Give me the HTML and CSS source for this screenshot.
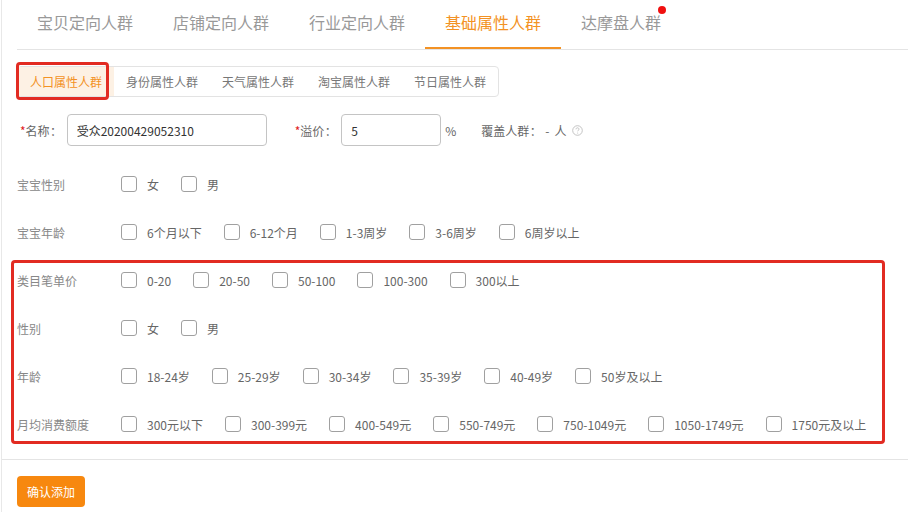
FILE: index.html
```html
<!DOCTYPE html>
<html lang="zh-CN">
<head>
    <meta charset="UTF-8">
    <title>基础属性人群</title>
    <link rel="stylesheet" href="styles.css">
</head>
<body>
    <div class="page">
        <div class="tabs">
            <div class="tab">宝贝定向人群</div>
            <div class="tab">店铺定向人群</div>
            <div class="tab">行业定向人群</div>
            <div class="tab active">基础属性人群</div>
            <div class="tab dot">达摩盘人群</div>
        </div>

        <div class="inner">
            <div class="subtabs">
                <div class="subtab active">人口属性人群<span class="mark mark-tab"></span></div>
                <div class="subtab">身份属性人群</div>
                <div class="subtab">天气属性人群</div>
                <div class="subtab">淘宝属性人群</div>
                <div class="subtab">节日属性人群</div>
            </div>

            <div class="form-row">
                <label class="field-label"><i>*</i>名称<span class="colon">：</span></label>
                <input class="text-input name-input" type="text" value="受众20200429052310">
                <label class="field-label price-label"><i>*</i>溢价<span class="colon">：</span></label>
                <input class="text-input price-input" type="text" value="5">
                <span class="unit">%</span>
                <span class="cover">覆盖人群<span class="colon">：</span><span class="dash">-</span>人</span>
                <svg class="help" width="11" height="11" viewBox="0 0 11 11">
                    <circle cx="5.5" cy="5.5" r="4.8" fill="none" stroke="#b5b5b5" stroke-width="0.8"/>
                    <path d="M4 4.3c0-.9.7-1.5 1.5-1.5s1.5.6 1.5 1.4c0 1-1.3 1.1-1.3 2.1" fill="none" stroke="#b5b5b5" stroke-width="0.8"/>
                    <circle cx="5.7" cy="7.9" r="0.5" fill="#b5b5b5"/>
                </svg>
            </div>

            <div id="rows"></div>
        </div>

        <div class="footer">
            <button class="btn">确认添加</button>
        </div>
    </div>

    <script>
        const groups = [
            { label: "宝宝性别", options: ["女", "男"] },
            { label: "宝宝年龄", options: ["6个月以下", "6-12个月", "1-3周岁", "3-6周岁", "6周岁以上"] },
            { label: "类目笔单价", options: ["0-20", "20-50", "50-100", "100-300", "300以上"], marked: true },
            { label: "性别", options: ["女", "男"], marked: true },
            { label: "年龄", options: ["18-24岁", "25-29岁", "30-34岁", "35-39岁", "40-49岁", "50岁及以上"], marked: true },
            { label: "月均消费额度", options: ["300元以下", "300-399元", "400-549元", "550-749元", "750-1049元", "1050-1749元", "1750元及以上"], marked: true }
        ];

        const rowsDiv = document.getElementById("rows");
        let markedBox = null;

        function rowHtml(group) {
            const opts = group.options.map(o =>
                `<label class="check"><span class="box"></span>${o}</label>`
            ).join("");
            return `<div class="row"><div class="row-label">${group.label}</div><div class="opts">${opts}</div></div>`;
        }

        groups.forEach(group => {
            if (group.marked) {
                if (!markedBox) {
                    markedBox = document.createElement("div");
                    markedBox.className = "marked";
                    markedBox.innerHTML = '<span class="mark mark-rows"></span>';
                    rowsDiv.appendChild(markedBox);
                }
                markedBox.insertAdjacentHTML("beforeend", rowHtml(group));
            } else {
                rowsDiv.insertAdjacentHTML("beforeend", rowHtml(group));
            }
        });
    </script>
</body>
</html>
```

FILE: styles.css
```css
body {
    margin: 0;
    font-family: "Noto Sans CJK SC", "Microsoft YaHei", sans-serif;
    font-size: 12px;
    color: #666;
    background: #fff;
}
.page {
    margin-left: 1px;
    border-left: 1px solid #e8e8e8;
    min-height: 512px;
    box-sizing: border-box;
}
.tabs {
    display: flex;
    margin-left: 15px;
    height: 49px;
    border-bottom: 1px solid #e4e4e4;
}
.tab {
    position: relative;
    padding: 0 20px;
    height: 49px;
    line-height: 45px;
    font-size: 16px;
    color: #999;
    box-sizing: border-box;
    border-bottom: 2px solid transparent;
}
.tab.active {
    color: #f39224;
    border-bottom-color: #f39224;
}
.tab.dot::after {
    content: "";
    position: absolute;
    right: 15px;
    top: 6px;
    width: 8px;
    height: 8px;
    border-radius: 50%;
    background: #f01010;
}
.inner {
    padding-left: 15px;
}
.subtabs {
    display: inline-flex;
    margin-top: 16px;
    border: 1px solid #e3e3e3;
    border-radius: 4px;
}
.subtab {
    position: relative;
    padding: 0 12px;
    line-height: 29px;
    color: #777;
}
.subtab.active {
    background: #fdf1e4;
    color: #f39224;
}
.mark {
    position: absolute;
    border: 3px solid #e22b22;
    border-radius: 4px;
    pointer-events: none;
}
.mark-tab {
    left: -2px;
    top: -5px;
    width: 87px;
    height: 32px;
}
.form-row {
    display: flex;
    align-items: center;
    margin-top: 17px;
    height: 32px;
}
.field-label {
    padding-left: 3px;
    margin-right: 4px;
    color: #666;
}
.field-label i {
    font-style: normal;
    color: #e02020;
}
.colon {
    display: inline-block;
    width: 13px;
    text-align: center;
}
.price-label {
    margin-left: 25px;
}
.text-input {
    height: 32px;
    box-sizing: border-box;
    border: 1px solid #c4c4c4;
    border-radius: 4px;
    padding: 0 9px;
    font-family: inherit;
    font-size: 12px;
    color: #333;
    outline: none;
}
.name-input {
    width: 200px;
}
.price-input {
    width: 100px;
}
.unit {
    margin-left: 4px;
    color: #666;
}
.cover {
    margin-left: 25px;
    color: #666;
}
.dash {
    margin: 0 5px 0 3px;
}
.help {
    margin-left: 5px;
}
#rows {
    margin-top: 14px;
}
.marked {
    position: relative;
}
.mark-rows {
    left: -6px;
    top: 4px;
    width: 868px;
    height: 178px;
}
.row {
    display: flex;
    align-items: center;
    height: 48px;
}
.row-label {
    width: 104px;
    flex-shrink: 0;
    color: #888;
}
.opts {
    display: flex;
    align-items: center;
}
.check {
    display: flex;
    align-items: center;
    margin-right: 22px;
    color: #666;
}
.box {
    width: 14px;
    height: 14px;
    border: 1px solid #a0a0a0;
    border-radius: 3px;
    margin-right: 10px;
}
.footer {
    margin-top: 11px;
    border-top: 1px solid #e4e4e4;
    padding: 16px 0 0 15px;
}
.btn {
    width: 68px;
    height: 31px;
    padding: 0;
    border: none;
    border-radius: 4px;
    background: #f7880f;
    color: #fff;
    font-family: inherit;
    font-size: 12px;
    cursor: pointer;
}
```
